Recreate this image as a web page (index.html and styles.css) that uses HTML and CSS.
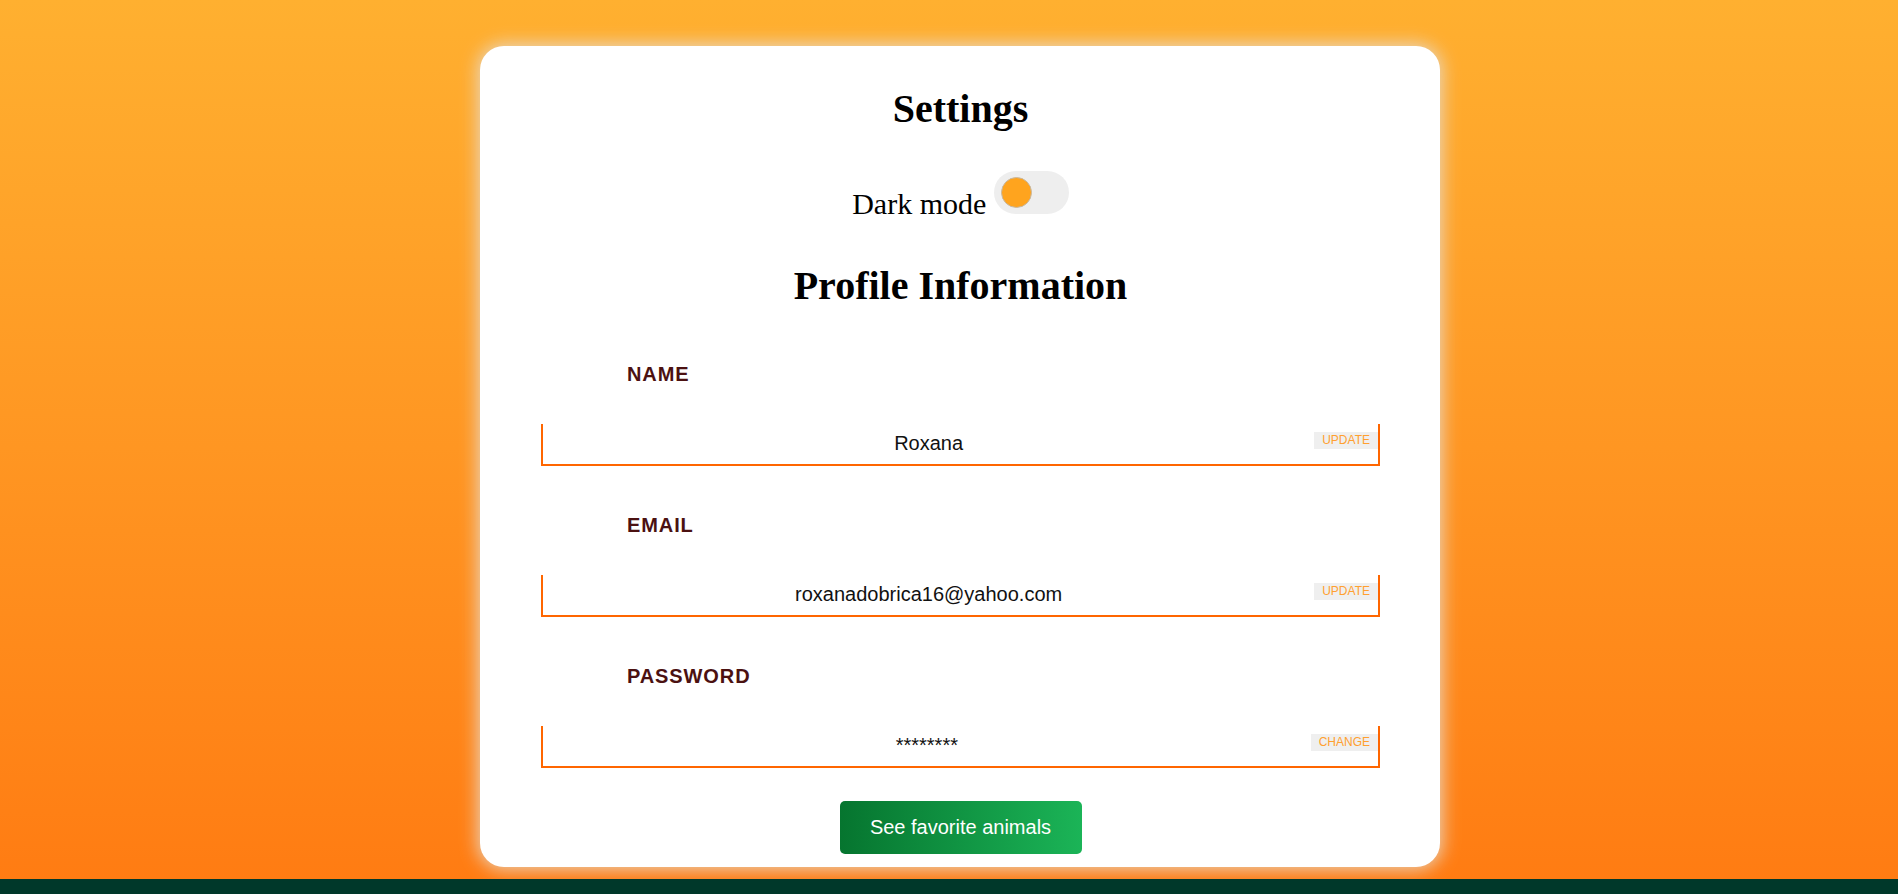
FILE: index.html
```html
<!DOCTYPE html>
<html lang="en">
<head>
<meta charset="utf-8">
<title>Settings</title>
<link rel="stylesheet" href="styles.css">
</head>
<body>
<main class="card">
  <h1 class="title">Settings</h1>
  <div class="mode-row">Dark mode <label class="toggle"><span class="knob"></span></label></div>
  <h2 class="title title-profile">Profile Information</h2>

  <section class="field">
    <div class="field-label">NAME</div>
    <div class="field-box">
      <input class="field-input" type="text" value="Roxana">
      <button class="field-btn" type="button">UPDATE</button>
    </div>
  </section>

  <section class="field">
    <div class="field-label">EMAIL</div>
    <div class="field-box">
      <input class="field-input" type="text" value="roxanadobrica16@yahoo.com">
      <button class="field-btn" type="button">UPDATE</button>
    </div>
  </section>

  <section class="field">
    <div class="field-label">PASSWORD</div>
    <div class="field-box">
      <input class="field-input" type="text" value="********">
      <button class="field-btn" type="button">CHANGE</button>
    </div>
  </section>

  <div class="actions">
    <button class="fav-btn" type="button">See favorite animals</button>
  </div>
</main>
<footer class="footer"></footer>
</body>
</html>
```

FILE: styles.css
```css
* { box-sizing: border-box; }

html, body {
  margin: 0;
  padding: 0;
}

body {
  height: 894px;
  overflow: hidden;
  padding-left: 22px;
  background: linear-gradient(to bottom, #ffb030 0%, #ff9622 50%, #ff7b12 100%);
  font-family: "Liberation Serif", "Times New Roman", serif;
  color: #000;
}

.card {
  width: 960px;
  height: 821px;
  margin: 46px auto 0;
  padding: 40px 60px 0 61px;
  background: #fff;
  border-radius: 24px;
  box-shadow: 0 0 18px 2px rgba(232, 218, 200, 0.95);
}

.title {
  margin: 0;
  font-family: "Liberation Serif", "Times New Roman", serif;
  font-weight: bold;
  font-size: 40px;
  line-height: 46px;
  text-align: center;
}

.mode-row {
  margin-top: 39px;
  font-size: 30px;
  text-align: center;
}

.toggle {
  display: inline-block;
  position: relative;
  width: 75px;
  height: 43px;
  margin-bottom: 0;
  border-radius: 22px;
  background: #eeeeee;
  vertical-align: baseline;
}

.knob {
  position: absolute;
  left: 7px;
  top: 6px;
  width: 31px;
  height: 31px;
  border-radius: 50%;
  background: #ffa41e;
  border: 1px solid #c8b8a0;
}

.title-profile {
  margin-top: 42px;
}

.field {
  margin-top: 54px;
}

.field + .field {
  margin-top: 48px;
}

.field-label {
  padding-left: 86px;
  font-family: "Liberation Sans", Arial, sans-serif;
  font-weight: bold;
  font-size: 20px;
  line-height: 23px;
  letter-spacing: 0.9px;
  color: #4b1111;
}

.field-box {
  display: flex;
  align-items: flex-start;
  height: 42px;
  margin-top: 38px;
  border-left: 2px solid #ff6600;
  border-right: 2px solid #ff6600;
  border-bottom: 2px solid #ff6600;
}

.field-input {
  flex: 1;
  min-width: 0;
  height: 40px;
  margin: 0;
  padding: 0 0 2px;
  border: none;
  outline: none;
  background: transparent;
  font-family: "Liberation Sans", Arial, sans-serif;
  font-size: 20px;
  color: #111;
  text-align: center;
}

.field-btn {
  height: 17px;
  margin: 8px 0 0;
  padding: 0 8px;
  border: none;
  background: #efefef;
  font-family: "Liberation Sans", Arial, sans-serif;
  font-size: 12px;
  line-height: 17px;
  color: #ffa030;
}

.actions {
  margin-top: 33px;
  text-align: center;
}

.fav-btn {
  width: 242px;
  height: 53px;
  padding: 0;
  border: none;
  border-radius: 5px;
  background: linear-gradient(to right, #06752f, #1bb457);
  font-family: "Liberation Sans", Arial, sans-serif;
  font-size: 20px;
  color: #fff;
}

.footer {
  height: 15px;
  margin: 12px 0 0 -22px;
  background: #00382a;
}
```
